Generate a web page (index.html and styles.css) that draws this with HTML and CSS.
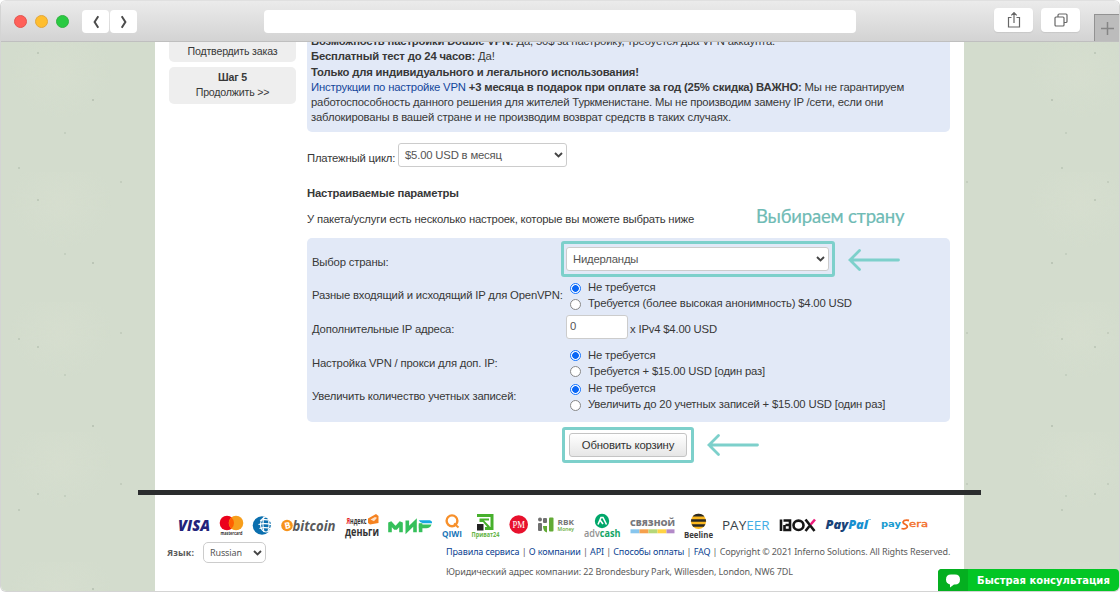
FILE: index.html
```html
<!DOCTYPE html>
<html lang="ru">
<head>
<meta charset="utf-8">
<title>Inferno Solutions</title>
<link rel="stylesheet" href="styles.css">
</head>
<body>
<div class="window">
  <header class="toolbar">
    <div class="lights"><i class="red"></i><i class="yellow"></i><i class="green"></i></div>
    <div class="nav">
      <span class="nav-btn"><svg width="8" height="14" viewBox="0 0 8 14"><path d="M6.3 1.2 2.6 7l3.700 5.800"/></svg></span>
      <span class="nav-btn"><svg width="8" height="14" viewBox="0 0 8 14"><path d="M1.700 1.200 5.400 7l-3.700 5.800"/></svg></span>
    </div>
    <div class="address"></div>
    <div class="tools">
      <span class="tool"><svg width="14" height="18" viewBox="0 0 14 18"><path d="M4.500 6.500H1.500v9.500h11V6.500h-3M7 12V1.800M4.300 4.300 7 1.600l2.700 2.700"/></svg></span>
      <span class="tool"><svg width="14" height="14" viewBox="0 0 14 14"><rect x="1" y="4" width="9" height="9" rx="1"/><path d="M4 4V2.200Q4 1 5.200 1H12q1 0 1 1v6.500q0 1-1.200 1H10"/></svg></span>
    </div>
    <span class="new-tab"><svg width="13" height="13" viewBox="0 0 13 13"><path d="M6.500 0v13M0 6.500h13"/></svg></span>
  </header>

  <div class="viewport">
    <div class="sheet">
      <div class="columns">
        <aside class="steps">
          <div class="step step-cut">Подтвердить заказ</div>
          <div class="step"><b>Шаг 5</b><br>Продолжить &gt;&gt;</div>
        </aside>
        <main class="main">
          <div class="description">
            <p class="l1"><b>Возможность настройки Double VPN:</b> Да, 50$ за настройку, требуется два VPN аккаунта.</p>
            <p class="l2"><b>Бесплатный тест до 24 часов:</b> Да!</p>
            <p class="l3"><b>Только для индивидуального и легального использования!</b></p>
            <p class="l4"><a>Инструкции по настройке VPN</a> <b>+3 месяца в подарок при оплате за год (25% скидка) ВАЖНО:</b> Мы не гарантируем</p>
            <p class="l5">работоспособность данного решения для жителей Туркменистане. Мы не производим замену IP /сети, если они</p>
            <p class="l6">заблокированы в вашей стране и не производим возврат средств в таких случаях.</p>
          </div>
          <div class="cycle">
            <label>Платежный цикл:</label>
            <div class="select select-cycle"><span>$5.00 USD в месяц</span><svg class="chev" width="9" height="6" viewBox="0 0 9 6"><path d="M1 1l3.500 3.500L8 1"/></svg></div>
          </div>
          <h3 class="heading">Настраиваемые параметры</h3>
          <div class="intro">
            <p>У пакета/услуги есть несколько настроек, которые вы можете выбрать ниже</p>
            <strong class="hint">Выбираем страну</strong>
          </div>
          <section class="options">
            <div class="row">
              <label>Выбор страны:</label>
              <div class="marked marked-country">
                <div class="select"><span>Нидерланды</span><svg class="chev" width="9" height="6" viewBox="0 0 9 6"><path d="M1 1l3.500 3.500L8 1"/></svg></div>
              </div>
              <svg class="arrow" width="54" height="24" viewBox="0 0 54 24"><path d="M51.500 12H3M12.500 2.500 3 12l9.500 9.500"/></svg>
            </div>
            <div class="row">
              <label>Разные входящий и исходящий IP для OpenVPN:</label>
              <div class="radios">
                <label><input type="radio" name="ip" checked>Не требуется</label>
                <label><input type="radio" name="ip">Требуется (более высокая анонимность) $4.00 USD</label>
              </div>
            </div>
            <div class="row">
              <label>Дополнительные IP адреса:</label>
              <div class="quantity"><input type="text" value="0"><span>x IPv4 $4.00 USD</span></div>
            </div>
            <div class="row">
              <label>Настройка VPN / прокси для доп. IP:</label>
              <div class="radios">
                <label><input type="radio" name="proxy" checked>Не требуется</label>
                <label><input type="radio" name="proxy">Требуется + $15.00 USD [один раз]</label>
              </div>
            </div>
            <div class="row">
              <label>Увеличить количество учетных записей:</label>
              <div class="radios">
                <label><input type="radio" name="acc" checked>Не требуется</label>
                <label><input type="radio" name="acc">Увеличить до 20 учетных записей + $15.00 USD [один раз]</label>
              </div>
            </div>
          </section>
          <div class="submit">
            <div class="marked"><button type="button">Обновить корзину</button></div>
            <svg class="arrow" width="54" height="24" viewBox="0 0 54 24"><path d="M51.500 12H3M12.500 2.500 3 12l9.500 9.500"/></svg>
          </div>
        </main>
      </div>

      <hr class="divider">

      <footer class="footer">
        <svg class="payments" width="765" height="34" viewBox="170 508 765 34">
          <g class="logo-text">
            <text x="178" y="531" font-size="15.500" font-weight="800" font-style="italic" fill="#23237a" textLength="32" lengthAdjust="spacingAndGlyphs">VISA</text>
            <circle cx="227" cy="523" r="7.300" fill="#eb001b"/><circle cx="236" cy="523" r="7.300" fill="#f79e1b"/><path d="M231.500 517.500a7.300 7.300 0 0 1 0 11 7.300 7.300 0 0 1 0-11z" fill="#ff5f00"/>
            <text x="220.500" y="534.500" font-size="4.500" font-weight="700" fill="#333" textLength="22" lengthAdjust="spacingAndGlyphs">mastercard</text>
            <circle cx="262" cy="525.500" r="9.300" fill="#0b6fae"/>
            <g fill="none" stroke="#fff" stroke-width="1.100"><ellipse cx="266" cy="524.500" rx="5.500" ry="7.500"/><path d="M260 520.500q5-2 11 .5M258.500 524.500q7-2 14 .5M259.500 528.500q6-2 11.500.5M264 517q-2 7.500 0 15M268 517.500q2 7 0 14"/></g>
            <circle cx="287" cy="525.500" r="5.800" fill="#f7931a"/><text x="284.500" y="528.800" font-size="9" font-weight="700" fill="#fff" transform="rotate(-12 287 525.500)">B</text>
            <text x="292.500" y="531" font-size="14" font-weight="700" font-style="italic" fill="#58595b" textLength="43" lengthAdjust="spacingAndGlyphs">bitcoin</text>
            <text x="346.500" y="524" font-size="8" font-weight="700" fill="#333" textLength="20" lengthAdjust="spacingAndGlyphs"><tspan fill="#e62424">Я</tspan>ндекс</text>
            <path d="M368 518.500l8-4.500 2.500 2v7l-8.500 1.500-2-1.500z" fill="#f58220"/><path d="M370.500 519.500l4.500-2.500 2 .8-3 3.500z" fill="#fff" opacity=".75"/>
            <text x="345" y="535.500" font-size="13" font-weight="700" fill="#333" textLength="34" lengthAdjust="spacingAndGlyphs">деньги</text>
            <g fill="none" stroke="#36c05b" stroke-width="3.600"><path d="M390 532.200v-9.700l5.500 6 5.500-6v9.700" stroke-linejoin="bevel"/><path d="M407.300 520.500v9.500l7.700-7.500v9.700"/><path d="M420.600 532.200v-9"/></g>
            <path d="M418.800 520.200h11q2.500.5 2.200 3h-9q-3-.2-4.200-3z" fill="#16a9e0"/><path d="M418.800 524.500h12.700q-1.200 3.800-5.200 3.800h-7.500z" fill="#36c05b"/>
            <circle cx="452" cy="520.800" r="5.400" fill="none" stroke="#f7902b" stroke-width="2.400"/><path d="M454 523.500l4.500 4" stroke="#f7902b" stroke-width="2"/>
            <text x="442" y="537" font-size="8.800" font-weight="700" fill="#1976b8" textLength="20" lengthAdjust="spacingAndGlyphs">QIWI</text>
            <path d="M477 514h16.500v16h-8.500v-3h5.500v-10H477z" fill="#47b02c"/><path d="M479.500 518.500h9.500v2h-5l6 6-2 1.500-5-6h-3.500z" fill="#47b02c"/><rect x="477" y="524" width="6.500" height="6.500" fill="#222"/>
            <text x="471.500" y="537" font-size="6.300" font-weight="700" fill="#65b446" textLength="28" lengthAdjust="spacingAndGlyphs">Приват24</text>
            <circle cx="518.700" cy="524.500" r="9.300" fill="#e8112d"/><text x="512.500" y="528" font-size="10" fill="#fff" class="serif" textLength="12.500" lengthAdjust="spacingAndGlyphs">PM</text>
            <g fill="#707070"><circle cx="540" cy="519.500" r="2"/><rect x="543" y="518" width="4" height="5" rx="1"/><rect x="538" y="523" width="4" height="8" rx="1"/></g><g fill="#62aa35"><rect x="549" y="517.500" width="4.500" height="14" rx="1"/><path d="M543 526h4v6.500q-4-1-4-6.500z"/></g>
            <text x="557.500" y="525" font-size="7" font-weight="700" fill="#777" textLength="16.500" lengthAdjust="spacingAndGlyphs">RBK</text><text x="557.500" y="530.500" font-size="5.500" font-weight="600" fill="#62aa35" textLength="16.500" lengthAdjust="spacingAndGlyphs">Money</text>
            <circle cx="602" cy="521" r="7.200" fill="#00a76a"/><path d="M598 524.500l3-7h2l3.500 7M600 520l3 4" fill="none" stroke="#fff" stroke-width="1.600"/>
            <text x="584" y="536.500" font-size="10.500" font-weight="600" fill="#929292" textLength="36.500" lengthAdjust="spacingAndGlyphs">adv<tspan fill="#14a566" font-weight="700">cash</tspan></text>
            <text x="630" y="526.300" font-size="9" font-weight="800" fill="#77777c" textLength="45" lengthAdjust="spacingAndGlyphs">СВЯЗНОЙ</text>
            <g><path d="M630.500 529.300h9v4h-9z" fill="#87c5ed"/><path d="M639.500 529.300h9v4h-9z" fill="#f5a04d"/><path d="M648.500 529.300h9v4h-9z" fill="#b5d779"/><path d="M657.500 529.300h9v4h-9z" fill="#ffd344"/><path d="M666.500 529.300h8v4h-8z" fill="#b38ac8"/></g>
            <circle cx="698.500" cy="521.300" r="7.600" fill="#fcb81e"/><path d="M694 515.100q4.500-2.800 9 0l1.500 1.400h-12zM691.100 519.200h14.800v2.600h-14.800zM691.600 524.300h13.800l-1.500 2.500h-10.800z" fill="#2a2927"/>
            <text x="684" y="537.800" font-size="9.500" font-weight="700" fill="#3b3939" textLength="29" lengthAdjust="spacingAndGlyphs">Beeline</text>
            <text x="722" y="529.500" font-size="13" fill="#39434a" textLength="47.500" lengthAdjust="spacingAndGlyphs">PAY<tspan fill="#44aee5">EER</tspan></text>
            <g fill="none" stroke="#161616" stroke-width="2.600"><path d="M781 519.500V531M783.500 520.500h6.500v4.500h-4.500M790 525v5h-5.500v-5"/><ellipse cx="798.500" cy="525.300" rx="5" ry="4.700"/><path d="M805.500 519.500l9 11.500"/><path d="M815 519.500l-4.300 5" stroke="#ed1c7b"/><path d="M809.500 526l-4 5"/></g>
            <text x="825.500" y="529" font-size="13" font-weight="800" font-style="italic" fill="#1a4378" textLength="42.500" lengthAdjust="spacingAndGlyphs">Pay<tspan fill="#178fd0">Pal</tspan></text><path d="M868 519.500h3" stroke="#71b9df" stroke-width=".8"/>
            <text class="wide" x="881" y="526.500" font-size="8.500" font-weight="700" fill="#189bd0" textLength="20" lengthAdjust="spacingAndGlyphs">pay</text><text class="wide" x="909" y="526.500" font-size="8.500" fill="#f26a21" stroke="#f26a21" stroke-width=".3" textLength="19" lengthAdjust="spacingAndGlyphs">era</text><path d="M909 520.500q-5-1-6 1.500 0 1.500 2.500 2.500 2.500 1.500 1.500 3-2 2.200-5.500 1" fill="none" stroke="#f26a21" stroke-width="1.800"/>
          </g>
        </svg>
        <div class="legal">
          <div class="language"><b>Язык:</b><div class="select"><span>Russian</span><svg class="chev" width="9" height="6" viewBox="0 0 9 6"><path d="M1 1l3.500 3.500L8 1"/></svg></div></div>
          <div class="legal-text">
            <p class="links"><a>Правила сервиса</a> | <a>О компании</a> | <a>API</a> | <a>Способы оплаты</a> | <a>FAQ</a> | Copyright © 2021 Inferno Solutions. All Rights Reserved.</p>
            <p class="legal-address">Юридический адрес компании: 22 Brondesbury Park, Willesden, London, NW6 7DL</p>
          </div>
        </div>
      </footer>
    </div>
  </div>
  <div class="chat"><span class="chat-icon"><svg width="16" height="14" viewBox="0 0 16 14"><path d="M6 .5h4q5 0 5 5t-5 5H9L5 13.500V10.400Q1 9.800 1 5.500q0-5 5-5z" fill="#fff"/></svg></span><b>Быстрая консультация</b></div>
</div>
</body>
</html>
```

FILE: styles.css
```css
* { box-sizing: border-box; }
body, p, h3 { margin: 0; }
body {
  width: 1120px;
  height: 593px;
  overflow: hidden;
  background: #fff;
  font: 11.3px/15.3px "Liberation Sans", Arial, sans-serif;
  letter-spacing: -.18px;
  color: #383838;
}
.window {
  position: relative;
  height: 592px;
  border: 1px solid #d4d4d4;
  border-top-color: #e0e0e0;
  border-radius: 6px;
  overflow: hidden;
}
.toolbar {
  display: flex;
  height: 41px;
  background: linear-gradient(#ebebeb, #d3d3d3);
  border-bottom: 1px solid #bfbfbf;
}
.lights { display: flex; gap: 8px; padding: 14px 0 0 13px; }
.lights i { width: 13px; height: 13px; border-radius: 50%; border: 1px solid #e2554f; background: #ff6059; }
.lights .yellow { background: #ffbe2f; border-color: #e2a73c; }
.lights .green { background: #2aca42; border-color: #32b342; }
.nav { display: flex; gap: 1px; margin: 9px 0 0 13px; }
.nav-btn { display: grid; place-items: center; width: 27px; height: 23px; background: #fff; border-radius: 4px; }
.nav-btn svg { fill: none; stroke: #4b4b4b; stroke-width: 2; }
.address { width: 592px; height: 23px; margin: 9px 0 0 127px; background: #fff; border-radius: 4px; }
.tools { display: flex; gap: 8px; margin: 7px 0 0 138px; }
.tool { display: grid; place-items: center; width: 39px; height: 24px; background: #fff; border-radius: 4px; box-shadow: 0 1px 1px #c8c8c8; }
.tool svg { fill: none; stroke: #666; stroke-width: 1.2; }
.new-tab { display: grid; place-items: center; flex: 1; height: 27px; margin: 13px 0 0 14px; background: #bcbcbc; border: solid #929292; border-width: 1px 0 0 1px; }
.new-tab svg { stroke: #858585; stroke-width: 1.5; }

.viewport {
  height: 549px;
  overflow: hidden;
  padding-left: 154px;
  background-color: #d3dccd;
  background-image:
    radial-gradient(circle at 37px 11px, #bfc9ba 0 .7px, transparent 1.400px),
    radial-gradient(circle at 92px 58px, #bcc5b7 0 .7px, transparent 1.400px),
    radial-gradient(circle at 64px 91px, #c4cebf 0 .7px, transparent 1.400px),
    radial-gradient(circle at 18px 126px, #c0cabb 0 .7px, transparent 1.400px),
    radial-gradient(circle at 120px 140px, #c4cdbe 0 .7px, transparent 1.400px),
    radial-gradient(ellipse at 60px 30px, #d6decf, transparent 50px);
  background-size: 151px 147px, 137px 163px, 143px 121px, 149px 171px, 141px 151px, 170px 130px;
}
.sheet { width: 809px; height: 100%; background: #fff; }
.columns { display: flex; gap: 11px; height: 448px; padding-left: 14px; }
.steps { width: 127px; text-align: center; font-size: 10.6px; }
.step { height: 37px; margin-bottom: 5px; padding-top: 3px; background: #eee; border-radius: 5px; }
.step-cut { height: 20px; padding-top: 1.500px; border-radius: 0 0 5px 5px; }
.main { width: 643px; }
.description { height: 90px; overflow: hidden; padding: 0 4px; background: #e2e9f7; border-radius: 0 0 5px 5px; white-space: nowrap; }
.description .l1 { margin-top: -8px; }
.description a { color: #14479b; }
.cycle { display: flex; gap: 3px; padding-top: 11px; height: 47px; }
.cycle label { width: 88px; padding-top: 8px; white-space: nowrap; }
.select { display: flex; align-items: center; justify-content: space-between; height: 24px; padding: 0 3px 0 6px; color: #555; background: #fff; border: 1px solid #ccc; border-radius: 3px; }
.select-cycle { width: 169px; }
.select-cycle span { padding-top: 1px; }
.chev { fill: none; stroke: #444; stroke-width: 1.9; }
.heading { padding-top: 7px; font-size: 11.3px; line-height: 15px; }
.intro { display: flex; gap: 62px; height: 37px; padding-top: 4px; white-space: nowrap; }
.intro p { width: 387px; padding-top: 7px; }
.hint { font: 400 18.500px/23px Lato, sans-serif; letter-spacing: -.2px; color: #6fbbb5; -webkit-text-stroke: .2px #6fbbb5; }
.options { height: 184px; padding: 7px 0 0 5px; background: #e2e9f7; border-radius: 5px; }
.row { display: flex; align-items: center; height: 33.700px; white-space: nowrap; }
.row > label { width: 254px; padding-top: 1px; }
.marked { border: 3px solid #7dd0cb; border-radius: 3px; }
.marked-country { width: 274px; height: 36px; margin: -5px 0 0 -5px; padding: 3px 3px 3px 2px; }
.arrow { fill: none; stroke: #7dd0cb; stroke-width: 2.8; stroke-linecap: round; }
.row .arrow { margin: -4px 0 0 12px; }
.radios label { display: flex; align-items: center; gap: 7px; height: 16px; padding: 1px 0 0 4px; }
.radios input { appearance: none; width: 11px; height: 11px; margin: 1px 0 0; border: 1px solid #888; border-radius: 50%; background: #fff; }
.radios input:checked { border-color: #1675ff; background: radial-gradient(circle, #0b67f5 0 3px, #fff 3.700px); }
.quantity { display: flex; gap: 2px; align-items: center; }
.quantity input { width: 62px; height: 24px; margin-top: -4px; padding: 0 4px 2px 3px; font: inherit; color: #555; border: 1px solid #ccc; border-radius: 3px; }
.submit { display: flex; gap: 12px; align-items: center; padding: 5px 0 0 255px; }
.submit .marked { width: 132px; height: 36px; padding: 3px; }
.submit button { display: block; width: 118px; height: 24px; margin-left: 1px; padding: 0; font: 11.3px/15px "Liberation Sans", Arial, sans-serif; letter-spacing: -.18px; color: #333; background: linear-gradient(#fff, #e6e6e6); border: 1px solid #c4c4c4; border-radius: 3px; white-space: nowrap; }
.divider { position: relative; width: 843px; height: 5px; margin: 0 0 0 -17px; background: #2b2d2e; border: 0; }

.footer { padding: 13px 0 0 12px; color: #5c5c5c; font: 9px/12px "Noto Sans", sans-serif; letter-spacing: -.12px; }
.payments { display: block; margin-left: 3px; letter-spacing: 0; }
.logo-text { font-family: "Open Sans", sans-serif; }
.serif { font-family: "Liberation Serif", serif; }
.wide { font-family: "DejaVu Sans", sans-serif; }
.legal { display: flex; white-space: nowrap; }
.language { display: flex; align-items: center; width: 279px; height: 21px; }
.language > b { width: 36px; letter-spacing: .1px; }
.language .select { width: 63px; height: 21px; border-radius: 5px; }
.legal-text { padding-top: 4px; }
.legal-text a { color: #0b3f91; }
.legal-address { padding-top: 8px; }
.chat { position: absolute; right: 0; bottom: 0; display: flex; width: 181px; height: 22px; background: #03c625; border-radius: 4px 4px 3px 0; overflow: hidden; color: #fff; font: 700 10px/23px "DejaVu Sans", sans-serif; letter-spacing: .03px; white-space: nowrap; }
.chat-icon { display: grid; place-items: center; width: 30px; padding-top: 2px; background: #05af20; }
.chat b { padding-left: 9px; }
```
